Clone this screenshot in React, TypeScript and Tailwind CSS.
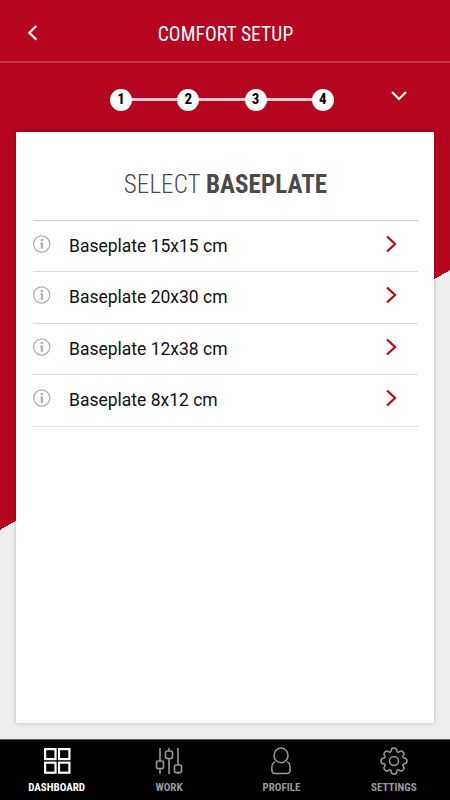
import type { ReactNode } from "react";

const baseplates = [
  { name: "Baseplate 15x15 cm", row: "h-[51px]" },
  { name: "Baseplate 20x30 cm", row: "h-[52px] pb-px" },
  { name: "Baseplate 12x38 cm", row: "h-[51px]" },
  { name: "Baseplate 8x12 cm", row: "h-[52px] pb-px" },
];

const steps = [1, 2, 3, 4];

// Outline of the settings gear: eight round teeth with a notch between each
function gearPath() {
  const point = (deg: number) => {
    const a = ((deg - 90) * Math.PI) / 180;
    return `${(14 + 10.8 * Math.cos(a)).toFixed(2)} ${(14 + 10.8 * Math.sin(a)).toFixed(2)}`;
  };
  let d = `M${point(-15)}`;
  for (let i = 0; i < 8; i++) {
    d += `A2.8 2.6 ${i * 45} 0 1 ${point(i * 45 + 15)}A1.5 1.5 0 0 0 ${point(i * 45 + 30)}`;
  }
  return d + "Z";
}

function DashboardIcon() {
  return (
    <svg width="28" height="28" viewBox="0 0 28 28" fill="none" stroke="currentColor" strokeWidth="2.2">
      <rect x="2.1" y="2.1" width="10.4" height="10" />
      <rect x="16" y="2.1" width="10.4" height="10" />
      <rect x="2.1" y="15.7" width="10.4" height="10" />
      <rect x="16" y="15.7" width="10.4" height="10" />
    </svg>
  );
}

function WorkIcon() {
  return (
    <svg width="28" height="28" viewBox="0 0 28 28" fill="none" stroke="currentColor" strokeWidth="1.6">
      <path d="M5 1v13M5 22v5M14 1v3M14 11.5V27M23 1v17M23 25.5V27" />
      <rect x="1.5" y="14" width="7" height="7.5" rx="1.8" />
      <rect x="10.5" y="4" width="7" height="7.5" rx="1.8" />
      <rect x="19.5" y="18" width="7" height="7.5" rx="1.8" />
    </svg>
  );
}

function ProfileIcon() {
  return (
    <svg width="28" height="28" viewBox="0 0 28 28" fill="none" stroke="currentColor" strokeWidth="1.5">
      <ellipse cx="14" cy="8.4" rx="7" ry="7.3" />
      <path d="M8.2 14.6C5.9 15.4 4.9 17.5 4.9 20v3.5c0 2 1.5 3 3.5 3h11.2c2 0 3.5-1 3.5-3V20c0-2.5-1-4.6-3.3-5.4" />
    </svg>
  );
}

function SettingsIcon() {
  return (
    <svg width="28" height="28" viewBox="0 0 28 28" fill="none" stroke="currentColor" strokeWidth="1.5">
      <path d={gearPath()} />
      <circle cx="14" cy="14" r="4.5" />
    </svg>
  );
}

function InfoIcon() {
  return (
    <svg className="shrink-0 text-[#adadad]" width="18" height="18" viewBox="0 0 18 18" fill="none">
      <circle cx="8.7" cy="9" r="8.1" stroke="currentColor" strokeWidth="1.2" />
      <rect x="7.7" y="4" width="2.3" height="2.2" fill="currentColor" />
      <path d="M7 7.5h3v6.3H7.7V8.4H7z" fill="currentColor" />
    </svg>
  );
}

function NavItem({ label, active, children }: { label: string; active?: boolean; children: ReactNode }) {
  return (
    <div className={`flex flex-1 flex-col items-center pt-[7px] ${active ? "text-white" : "text-[#999999]"}`}>
      {children}
      <span className="mt-[6px] text-[11px] leading-[14px] font-bold">{label}</span>
    </div>
  );
}

export default function App() {
  return (
    <div className="flex h-[800px] w-[450px] flex-col overflow-hidden bg-[linear-gradient(150deg,#b6051e_50%,#eeeeee_50%)] font-['Roboto_Condensed',Roboto,sans-serif] [font-stretch:75%]">
      {/* Header */}
      <header className="flex h-[63px] items-center border-b-2 border-[#c0384a] px-[27px] pt-[9px]">
        <svg className="-mt-[5px]" width="12" height="18" viewBox="0 0 12 18" fill="none" stroke="white" strokeWidth="2.2">
          <path d="M9.3 2 2.3 8.8l7 6.8" />
        </svg>
        <h1 className="flex-1 pr-[11px] text-center text-[19.5px] leading-6 font-normal tracking-[0.1px] text-white">
          COMFORT SETUP
        </h1>
      </header>

      {/* Progress */}
      <div className="flex h-[69px] items-center pt-[4px] pr-[42px] pl-[110px]">
        <div className="flex items-center">
          {steps.map((step) => (
            <div key={step} className="flex items-center">
              {step > 1 && <div className="h-[3px] w-[45.3px] bg-[#f1ccd1]" />}
              <div className="flex size-[22px] items-center justify-center rounded-full bg-white pb-px text-[15px] leading-none font-bold text-black">
                {step}
              </div>
            </div>
          ))}
        </div>
        <svg className="mb-[7px] ml-auto" width="18" height="12" viewBox="0 0 18 12" fill="none" stroke="white" strokeWidth="2.2">
          <path d="m2 2 7 7 7-7" />
        </svg>
      </div>

      {/* Card */}
      <main className="mx-4 h-[591px] bg-white pt-[37px] pr-4 pl-[17px] shadow-[0_0_4px_rgba(0,0,0,0.25)]">
        <h2 className="text-center text-[25px] leading-8 font-light tracking-[0.1px] text-[#4a4a4a]">
          SELECT <b className="font-bold">BASEPLATE</b>
        </h2>
        <ul className="mt-[19px] border-t border-[#cccccc]">
          {baseplates.map((plate) => (
            <li key={plate.name} className={`flex items-center border-b border-[#dcdcdc] ${plate.row}`}>
              <span className="-mt-[4px]">
                <InfoIcon />
              </span>
              <span className="ml-[18px] font-[Roboto,sans-serif] text-[17.5px] leading-6 text-[#111111] [font-stretch:100%]">
                {plate.name}
              </span>
              <svg className="-mt-[4px] mr-5 ml-auto" width="14" height="18" viewBox="0 0 14 18" fill="none" stroke="#bb0a18" strokeWidth="2.3">
                <path d="m3 1.5 8 7.5-8 7.5" />
              </svg>
            </li>
          ))}
        </ul>
      </main>

      {/* Bottom navigation */}
      <nav className="mt-auto flex h-[61px] border-t border-[#555555] bg-black pl-[0.4px]">
        <NavItem label="DASHBOARD" active>
          <DashboardIcon />
        </NavItem>
        <NavItem label="WORK">
          <WorkIcon />
        </NavItem>
        <NavItem label="PROFILE">
          <ProfileIcon />
        </NavItem>
        <NavItem label="SETTINGS">
          <SettingsIcon />
        </NavItem>
      </nav>
    </div>
  );
}
